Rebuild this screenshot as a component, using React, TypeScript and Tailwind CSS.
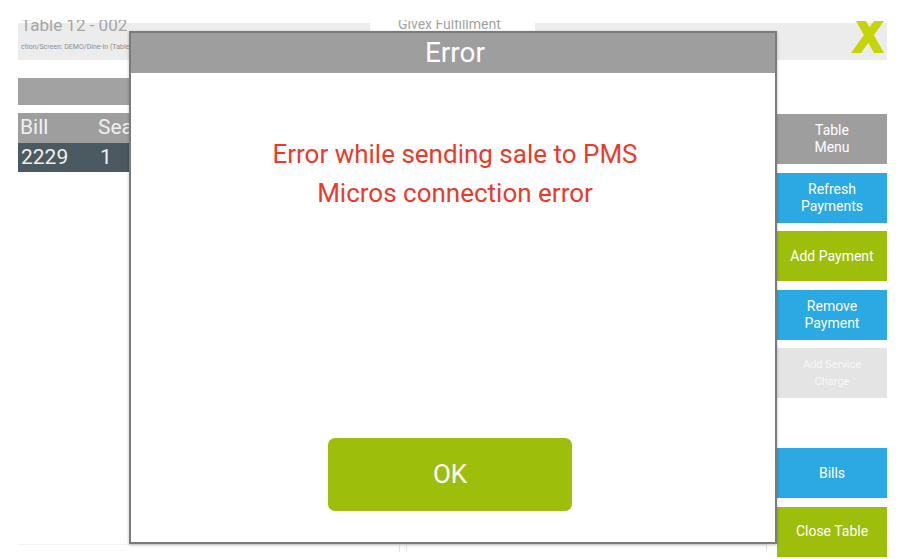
import React from 'react';

const sideButtons = [
  { label: ['Table', 'Menu'], cls: 'bg-[#9e9e9e] text-white text-[14px]' },
  { label: ['Refresh', 'Payments'], cls: 'bg-[#2aa9e2] text-white text-[14px]' },
  { label: ['Add Payment'], cls: 'bg-[#9dbe0b] text-white text-[14px]' },
  { label: ['Remove', 'Payment'], cls: 'bg-[#2aa9e2] text-white text-[14px]' },
  { label: ['Add Service', 'Charge'], cls: 'bg-[#e4e4e4] text-[#f7f7f7] text-[11px]' },
];

const SideButton = ({ label, cls }: { label: string[]; cls: string }) => (
  <div className={`h-[50px] flex flex-col items-center justify-center leading-[17px] ${cls}`}>
    {label.map(l => (
      <span key={l}>{l}</span>
    ))}
  </div>
);

export default function App() {
  return (
    <div className="relative w-[905px] h-[559px] overflow-hidden bg-white font-['Roboto',sans-serif]">
      <div className="pt-[20px] pl-[18px] pr-[18px] h-full flex flex-col">
        {/* HEADER */}
        <div className="flex h-[40px] overflow-hidden shrink-0">
          <div className="w-[352px] bg-[#ececec] border-t-[3px] border-white pl-[3px]">
            <div className="text-[17px] leading-none -mt-[6px] text-[#a5a5a5]">Table 12 - 002</div>
            <div className="text-[7px] leading-none mt-[10px] text-[#8c8c8c] whitespace-nowrap">
              ction/Screen: DEMO/Dine-In (Table 12)
            </div>
          </div>
          <div className="w-[165px] pl-[28px]">
            <div className="text-[14px] leading-none -mt-[3px] text-[#a3a3a3]">Givex Fulfillment</div>
          </div>
          <div className="flex-1 bg-[#ececec] border-t-[3px] border-white flex justify-end pr-[2px]">
            <svg width="34" height="34" viewBox="0 0 34 34" className="-mt-[2px]">
              <polygon points="5,0 15,0 33,32 23,32" fill="#c6d40a" />
              <polygon points="23,0 33,0 10,32 0,32" fill="#c6d40a" />
            </svg>
          </div>
        </div>

        {/* BODY */}
        <div className="flex flex-1">
          <div className="flex-1 flex flex-col pr-[10px]">
            <div className="mt-[18px] h-[27px] bg-[#a2a2a2]" />
            <div className="mt-[8px] h-[30px] bg-[#9e9e9e] flex items-center text-[21px] text-[#f0f0f0]">
              <span className="w-[80px] pl-[2px]">Bill</span>
              <span>Seat</span>
            </div>
            <div className="h-[29px] bg-[#4b5a61] flex items-center text-[21px] text-[#eeeeee]">
              <span className="w-[80px] pl-[3px]">2229</span>
              <span className="pl-[2px]">1</span>
            </div>
            <div className="mt-auto mb-[7px] h-[8px] border-t border-[#f3f3f3] flex">
              <div className="w-[382px] border-r border-[#e6e6e6]" />
              <div className="w-[7px] border-r border-[#e6e6e6]" />
              <div className="flex-1 border-r border-[#e6e6e6]" />
            </div>
          </div>
          <div className="w-[110px] flex flex-col pt-[54px] gap-[8.5px]">
            {sideButtons.map(b => (
              <SideButton key={b.label.join(' ')} label={b.label} cls={b.cls} />
            ))}
            <div className="h-[33px]" />
            <SideButton label={['Bills']} cls="bg-[#2aa9e2] text-white text-[14px]" />
            <SideButton label={['Close Table']} cls="bg-[#9dbe0b] text-white text-[14px]" />
          </div>
        </div>
      </div>

      {/* ERROR DIALOG */}
      <div className="absolute left-[129px] top-[31px] w-[648px] h-[513px] border-2 border-[#7b7b7b] bg-white flex flex-col shadow-[0_1px_3px_rgba(0,0,0,0.25)]">
        <div className="h-[40px] bg-[#9e9e9e] flex items-center justify-center text-[28px] text-white pl-[4px]">
          Error
        </div>
        <div className="flex-1 flex flex-col">
          <div className="pt-[62px] text-center text-[26px] leading-[39px] text-[#ea3a2b] pl-[4px]">
            <div>Error while sending sale to PMS</div>
            <div>Micros connection error</div>
          </div>
          <div className="flex-1" />
          <button className="ml-[197px] mb-[31px] w-[244px] h-[73px] rounded-[7px] bg-[#9dbe0b] text-[26px] text-white">
            OK
          </button>
        </div>
      </div>
    </div>
  );
}
